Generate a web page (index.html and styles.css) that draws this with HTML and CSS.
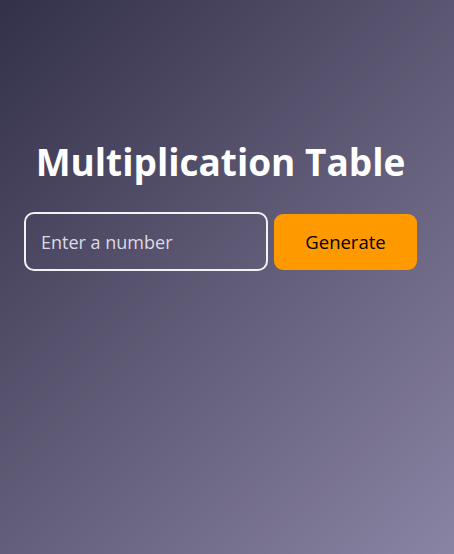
FILE: index.html
```html
<!DOCTYPE html>
<html lang="en">
<head>
<meta charset="utf-8">
<title>Multiplication Table</title>
<link rel="stylesheet" href="styles.css">
</head>
<body>
<main class="app">
  <h1 class="title">Multiplication Table</h1>
  <div class="controls">
    <input class="number-input" type="text" placeholder="Enter a number">
    <button class="generate-btn" type="button">Generate</button>
  </div>
</main>
</body>
</html>
```
FILE: styles.css
```css
html, body {
  margin: 0;
  height: 100%;
}
body {
  background: linear-gradient(135deg, #33304a 0%, #5f5a75 50%, #8a84a4 100%);
  font-family: "Open Sans", "Noto Sans", sans-serif;
  color: #fff;
}
.app {
  display: flex;
  flex-direction: column;
  align-items: center;
  padding: 135px 37px 0 24px;
}
.title {
  margin: 0 0 24px;
  font-size: 37px;
  font-weight: 700;
  line-height: 53px;
  color: #fff;
}
.controls {
  display: flex;
  align-items: center;
  gap: 6px;
}
.number-input {
  box-sizing: border-box;
  width: 244px;
  height: 59px;
  padding: 0 15px;
  border: 2px solid #f2f2f5;
  border-radius: 10px;
  background: transparent;
  color: #fff;
  font-family: inherit;
  font-size: 18px;
  outline: none;
}
.number-input::placeholder {
  color: #dcdae3;
}
.generate-btn {
  box-sizing: border-box;
  width: 143px;
  height: 56px;
  border: none;
  border-radius: 9px;
  background: #ff9900;
  color: #000;
  font-family: inherit;
  font-size: 18.5px;
  cursor: pointer;
}
```
